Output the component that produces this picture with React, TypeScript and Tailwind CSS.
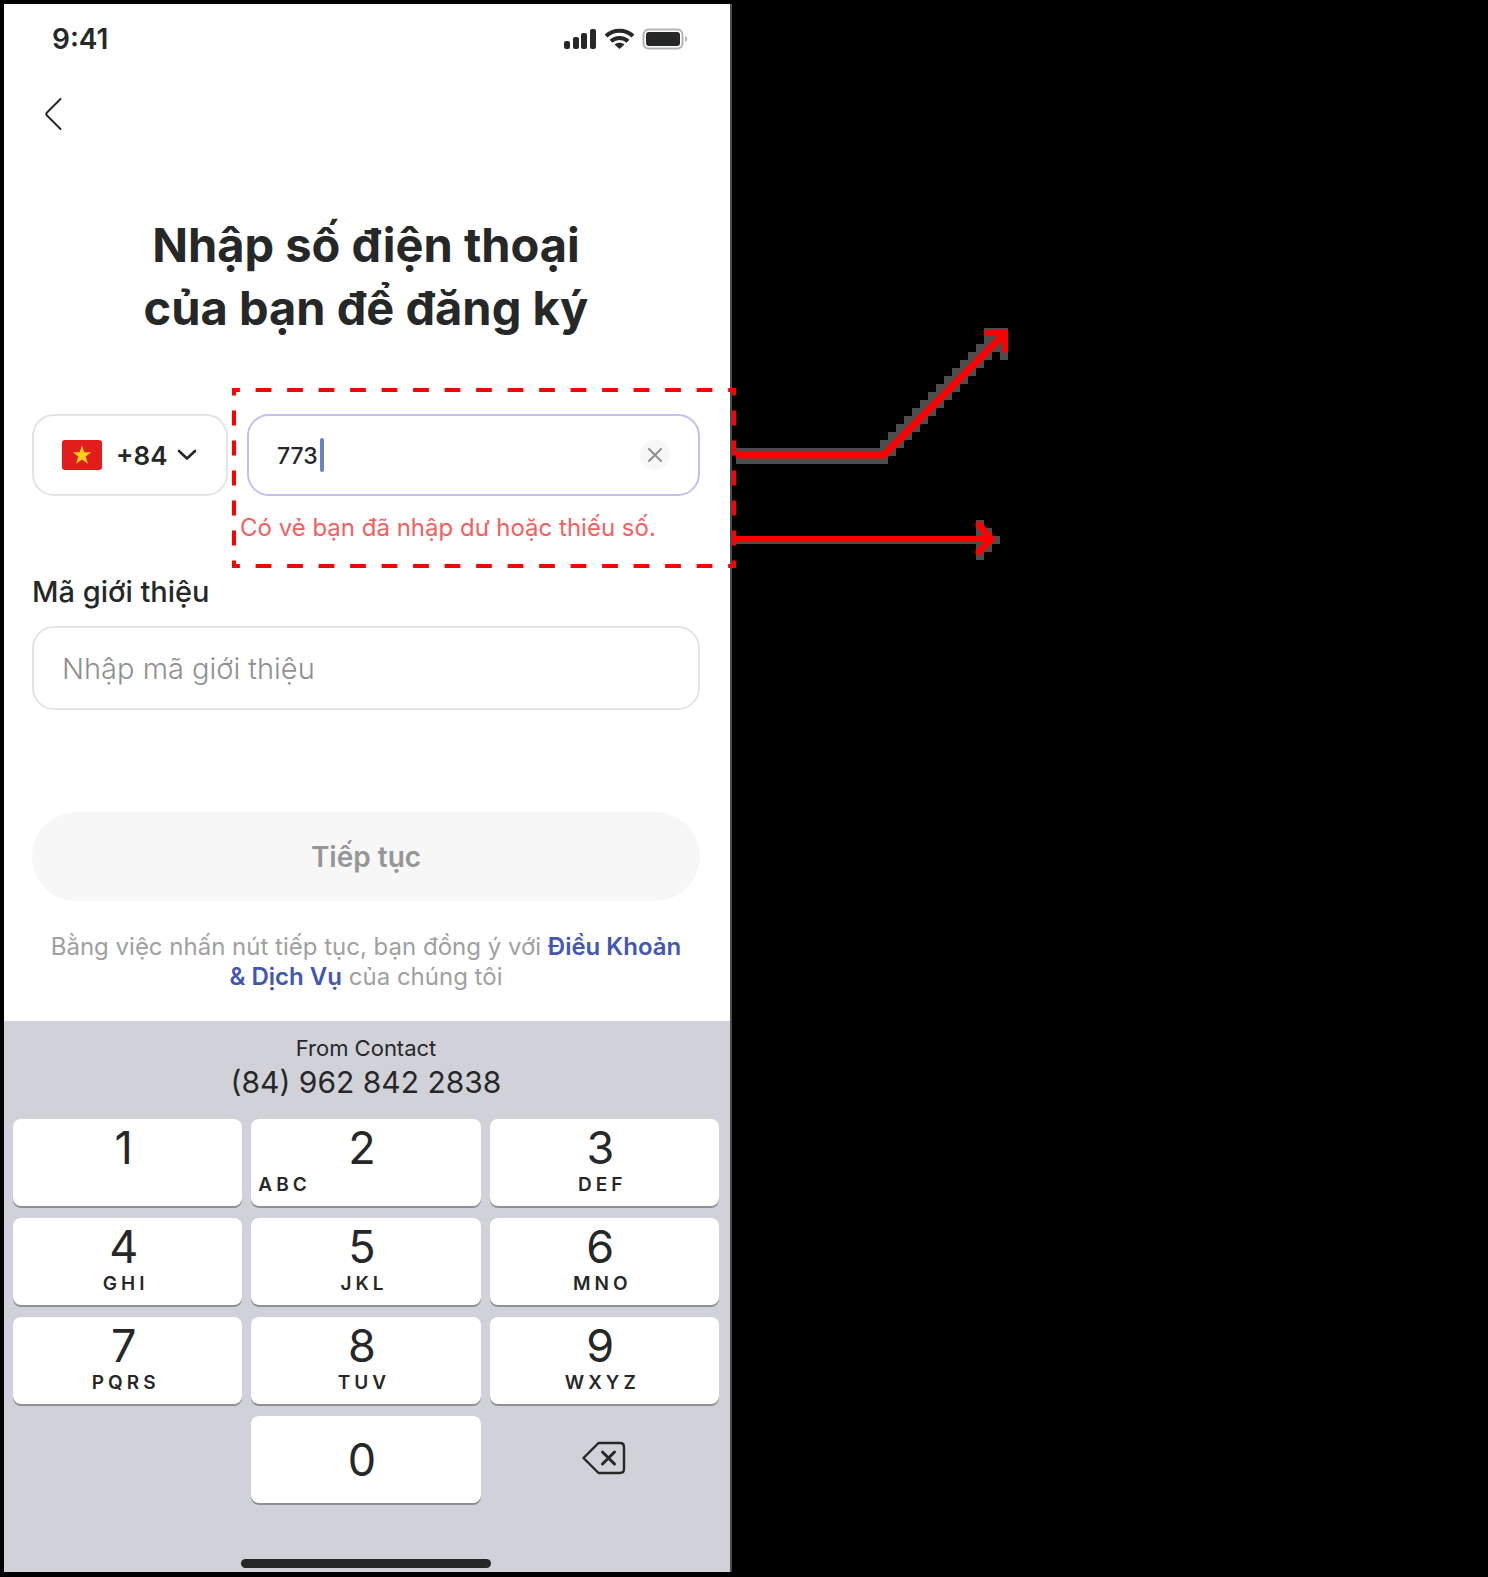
import React from "react";

type KeyDef = { digit: string; letters?: string; align?: "left" };

const keys: KeyDef[] = [
  { digit: "1" },
  { digit: "2", letters: "ABC", align: "left" },
  { digit: "3", letters: "DEF" },
  { digit: "4", letters: "GHI" },
  { digit: "5", letters: "JKL" },
  { digit: "6", letters: "MNO" },
  { digit: "7", letters: "PQRS" },
  { digit: "8", letters: "TUV" },
  { digit: "9", letters: "WXYZ" },
];

const keyClass = "h-[87px] rounded-lg bg-white shadow-[0_2px_0_#8f9094]";

function StatusBar() {
  return (
    <div className="flex h-[70px] items-center justify-between pr-10 pl-12">
      <span className="text-[28px] leading-8 font-semibold">9:41</span>
      <svg width="126" height="24" viewBox="0 0 126 24" fill="#262828" aria-hidden="true">
        <rect x="0" y="14" width="6" height="8" rx="2" />
        <rect x="9" y="10" width="6" height="12" rx="2" />
        <rect x="17" y="6" width="6" height="16" rx="2" />
        <rect x="26" y="2" width="6" height="20" rx="2" />
        <g fill="none" stroke="#262828" strokeWidth="4">
          <path d="M42 9C49.500 2 61.500 2 69 9" />
          <path d="M47 14.200C51.500 9.800 59.500 9.800 64 14.200" />
        </g>
        <path d="M50.500 17.500C53.200 15 57.800 15 60.500 17.500L55.500 22Z" />
        <rect x="79.500" y="2.500" width="39" height="19" rx="5" fill="none" stroke="#b4b4b4" strokeWidth="2" />
        <rect x="82" y="5" width="34" height="14" rx="3" />
        <path d="M121 9C124 10 124 14 121 15Z" fill="#b4b4b4" />
      </svg>
    </div>
  );
}

function Flag() {
  return (
    <svg className="shrink-0" width="40" height="30" viewBox="0 0 40 30" aria-hidden="true">
      <rect width="40" height="30" rx="3" fill="#e31d1c" />
      <path
        d="M20 5.500L22.300 12.200L29.200 12.200L23.700 16.500L25.900 23.800L20 19.500L14.100 23.800L16.300 16.500L10.800 12.200L17.700 12.200Z"
        fill="#ffd018"
      />
    </svg>
  );
}

function Keyboard() {
  return (
    <section aria-label="Keyboard" className="bg-[#d1d2d9] pt-[13px] pr-[11px] pb-1 pl-[9px]">
      <div className="text-center">
        <p className="text-[22px] leading-7">From Contact</p>
        <p className="text-[30px] leading-10">(84) 962 842 2838</p>
      </div>
      <div className="mt-[17px] grid grid-cols-3 gap-x-[9px] gap-y-3">
        {keys.map((k) => (
          <button key={k.digit} type="button" className={keyClass + " flex flex-col pt-2 pr-2"}>
            <span className="w-full text-center text-[45px] leading-[42px]">{k.digit}</span>
            {k.letters && (
              <span
                className={
                  "mt-1 w-full text-[19px] leading-6 font-semibold tracking-[4px] " +
                  (k.align === "left" ? "pl-[7px] text-left" : "pl-1 text-center")
                }
              >
                {k.letters}
              </span>
            )}
          </button>
        ))}
        <span />
        <button type="button" className={keyClass + " pr-2 text-[45px]"}>0</button>
        <button type="button" aria-label="Delete" className="flex items-center justify-center pb-1">
          <svg width="44" height="34" viewBox="0 0 44 34" fill="none" stroke="#262828" strokeWidth="2.400" strokeLinejoin="round" strokeLinecap="round">
            <path d="M16.500 2H38C40.500 2 42 3.500 42 6V28C42 30.500 40.500 32 38 32H16.500L1.500 17Z" />
            <path d="M20.500 11L32.500 23M32.500 11L20.500 23" strokeWidth="3" />
          </svg>
        </button>
      </div>
      <div className="mx-auto mt-14 h-[9px] w-[250px] rounded-full bg-[#262828]" />
    </section>
  );
}

/* Dashed highlight round the phone field, with its two callout arrows. */
function Callouts() {
  const steps = Array.from({ length: 13 }, (_, i) => i);
  return (
    <svg
      className="pointer-events-none absolute top-[316px] left-[228px]"
      width="780"
      height="256"
      viewBox="232 320 780 256"
      fill="none"
      aria-hidden="true"
    >
      <g fill="#4d4d4d" shapeRendering="crispEdges">
        <rect x="736" y="448" width="152" height="16" />
        <rect x="880" y="448" width="16" height="8" />
        {steps.map((i) => (
          <rect key={i} x={880 + 8 * i} y={440 - 8 * i} width="24" height="8" />
        ))}
        <rect x="984" y="328" width="24" height="16" />
        <rect x="1000" y="328" width="8" height="32" />
        <rect x="736" y="536" width="264" height="8" />
        <rect x="976" y="520" width="8" height="40" />
        <rect x="984" y="528" width="8" height="24" />
      </g>
      <g stroke="#ff0000">
        <g strokeWidth="4">
          <path d="M232 390H736M232 566H736" strokeDasharray="15.750 15.750" strokeDashoffset="7.875" />
          <path d="M234 388V568M734 388V568" strokeDasharray="15 15" strokeDashoffset="7.500" />
        </g>
        <g strokeWidth="6">
          <path d="M736 455H884L1004 334" strokeWidth="7" />
          <path d="M987 333H1005V350" strokeLinecap="round" />
          <path d="M732 539H990" />
          <path d="M979 525L991 539L979 552" strokeWidth="7" strokeLinecap="round" />
        </g>
      </g>
    </svg>
  );
}

export default function App() {
  return (
    <div className="min-h-screen overflow-x-hidden bg-black p-1 font-['Inter',sans-serif] text-[#262828]">
      <main className="relative w-full max-w-[728px] border-r-2 border-[#4d4d4d] bg-white">
        <StatusBar />
        <header className="flex h-20 items-center px-10">
          <button type="button" aria-label="Quay lại">
            <svg width="20" height="34" viewBox="0 0 20 34" fill="none" stroke="#262828" strokeWidth="2" strokeLinecap="round">
              <path d="M16.500 2L3 15.500C2 16.500 2 17.500 3 18.500L16.500 32" />
            </svg>
          </button>
        </header>

        <form className="pt-[59px] pr-[30px] pb-[29px] pl-7" onSubmit={(e) => e.preventDefault()}>
          <h1 className="text-center text-[47px] leading-[63px] font-bold">
            Nhập số điện thoại
            <br />
            của bạn để đăng ký
          </h1>

          <div className="mt-[75px] flex items-start gap-3">
            <div className="flex h-[82px] w-[196px] shrink-0 items-center rounded-[22px] border-2 border-[#e4e4e4] pl-7">
              <Flag />
              <select
                aria-label="Mã quốc gia"
                defaultValue="+84"
                className="ml-[14px] w-[56px] appearance-none bg-transparent text-[26px] font-semibold outline-none"
              >
                <option>+84</option>
              </select>
              <svg className="ml-[5px]" width="20" height="12" viewBox="0 0 20 12" fill="none" stroke="#262828" strokeWidth="2.600" strokeLinecap="round" strokeLinejoin="round" aria-hidden="true">
                <path d="M2 2L10 9.500L18 2" />
              </svg>
            </div>

            <div className="min-w-0 flex-1">
              <div className="ml-[7px] flex h-[82px] items-center rounded-[22px] border-2 border-[#c3bff0] px-7">
                <input
                  aria-label="Số điện thoại"
                  aria-describedby="phone-error"
                  inputMode="numeric"
                  defaultValue="773"
                  className="h-10 w-[43px] bg-transparent pt-px text-[23px] font-medium outline-none"
                />
                <span className="h-[34px] w-1 rounded-full bg-[#6c80c2]" />
                <button type="button" aria-label="Xóa" className="ml-auto flex size-[30px] items-center justify-center rounded-full bg-[#f7f7f7]">
                  <svg width="16" height="16" viewBox="0 0 16 16" stroke="#8f8f8f" strokeWidth="2" strokeLinecap="round">
                    <path d="M2 2L14 14M14 2L2 14" />
                  </svg>
                </button>
              </div>
              <p id="phone-error" className="mt-4 text-[24px] leading-8 whitespace-nowrap text-[#f5605f]">
                Có vẻ bạn đã nhập dư hoặc thiếu số.
              </p>
            </div>
          </div>

          <label htmlFor="referral" className="mt-8 block text-[29px] leading-8 font-medium">
            Mã giới thiệu
          </label>
          <input
            id="referral"
            placeholder="Nhập mã giới thiệu"
            className="mt-[18px] block h-[84px] w-full rounded-[22px] border-2 border-[#e4e4e4] px-7 text-[29px] font-light outline-none placeholder:text-[#8f8f8f]"
          />

          <button type="submit" disabled className="mt-[102px] block h-[89px] w-full rounded-full bg-[#f7f7f7] text-[28px] font-semibold text-[#969696]">
            Tiếp tục
          </button>

          <p className="mt-[31px] text-center text-[24px] leading-[30px] text-[#a0a0a0]">
            Bằng việc nhấn nút tiếp tục, bạn đồng ý với{" "}
            <a href="#terms" className="font-semibold text-[#4257b2]">
              Điều Khoản
              <br />
              &amp; Dịch Vụ
            </a>{" "}
            của chúng tôi
          </p>
        </form>

        <Keyboard />
        <Callouts />
      </main>
    </div>
  );
}
